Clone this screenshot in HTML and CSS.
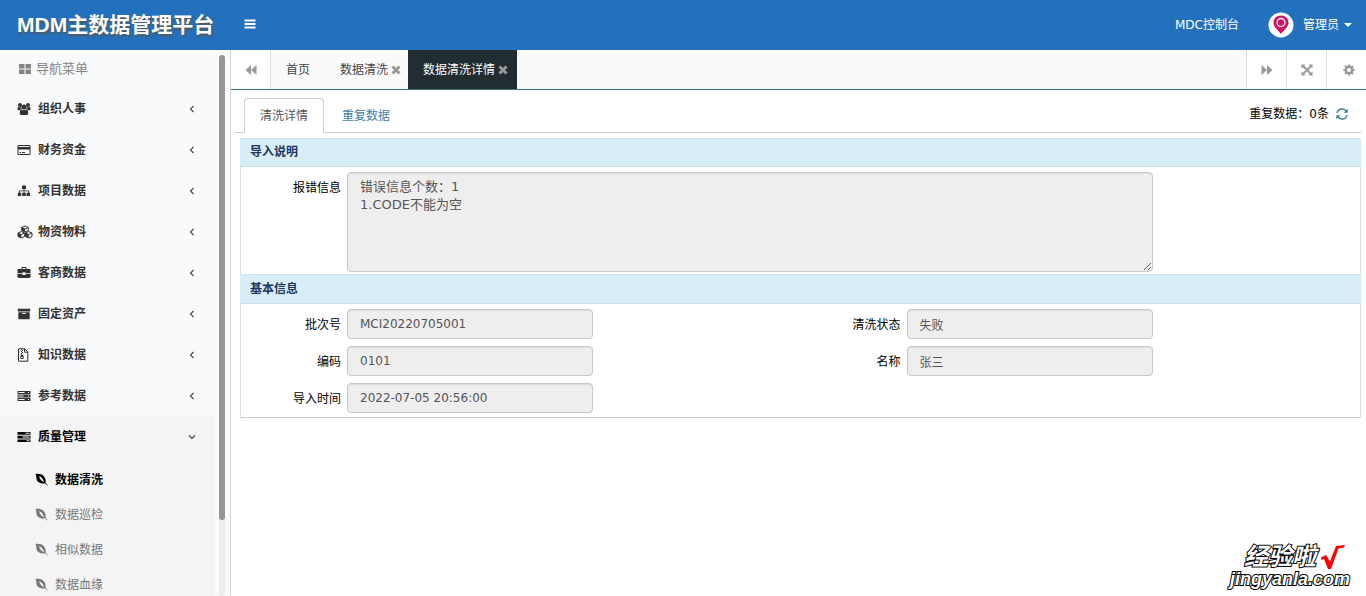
FILE: index.html
```html
<!DOCTYPE html>
<html lang="zh-CN">
<head>
<meta charset="utf-8">
<title>MDM主数据管理平台</title>
<link rel="stylesheet" href="styles.css">
</head>
<body>
<svg class="sprite" aria-hidden="true">
  <symbol id="chevron" viewBox="0 0 8 8"><path d="M5.500 1L2.500 4l3 3" fill="none" stroke="currentColor" stroke-width="1.100"/></symbol>
  <symbol id="leaf" viewBox="0 0 14 14"><path fill-rule="evenodd" d="M.5 1c3.500-.4 7 .2 9 2.400 1.700 1.900 2.300 4.400 1.800 6.900l2.400 2.900-.3.300-2.700-2.400C7.500 11.700 4 11 2.400 8.700 1 6.500 2 3 .5 1zM4.500 3.200c.1 2.600 2 5.400 5.200 6.800C9.300 7.500 7.500 4.500 4.500 3.200z"/></symbol>
  <symbol id="times" viewBox="0 0 10 10"><path d="M1.500 1.500l7 7m0-7l-7 7" fill="none" stroke="currentColor" stroke-width="3"/></symbol>
</svg>

<header class="topbar">
  <h1 class="brand">MDM主数据管理平台</h1>
  <button class="menu-toggle" aria-label="切换菜单"><svg class="icon-12" viewBox="0 0 12 12"><path d="M.5 1.500h11v2H.5zM.5 5h11v2H.5zM.5 8.500h11v2H.5z"/></svg></button>
  <a class="console" href="#">MDC控制台</a>
  <a class="user" href="#">
    <svg class="avatar" viewBox="0 0 26 26"><circle cx="13" cy="13" r="12.500" fill="#fff"/><path fill="#d0125f" d="M13 3.500c-4.300 0-7.500 3-7.500 7 0 4.500 4.500 7.500 7.500 11.500 3-4 7.500-7 7.500-11.500 0-4-3.200-7-7.500-7z"/><circle cx="13" cy="10.500" r="4" fill="none" stroke="#fff" stroke-width="1.300"/></svg>
    <span>管理员</span>
    <svg class="caret" viewBox="0 0 8 4"><path d="M0 0h8L4 4z"/></svg>
  </a>
</header>

<div class="shell">
  <aside class="sidebar">
    <nav class="nav">
      <div class="nav-title"><svg class="icon-14" viewBox="0 0 14 14"><path d="M1 2h5.500v4.500H1zM7.500 2H13v4.500H7.500zM1 7.500h5.500V12H1zM7.500 7.500H13V12H7.500z"/></svg>导航菜单</div>
      <a class="nav-item" href="#"><svg class="icon-14" viewBox="0 0 14 14"><circle cx="3" cy="3" r="2"/><circle cx="11" cy="3" r="2"/><path d="M.5 7.500C.3 5.500 1 4.700 2 4.900c1 .6 1.800.4 2.300.1 0 1 .1 1.500.6 2.200-1 0-1.800.3-2.200 1H1.500c-.6 0-1-.2-1-.7zM13.500 7.500c.2-2-.5-2.800-1.500-2.600-1 .6-1.800.4-2.300.1 0 1-.1 1.500-.6 2.200 1 0 1.800.3 2.200 1h1.200c.6 0 1-.2 1-.7z"/><circle cx="7" cy="5" r="2.500"/><path d="M4.800 7.400c1.400 1 3 1 4.400 0 1.500 0 2.100 1.700 2.100 3.700 0 1.200-.7 1.900-1.800 1.900h-5c-1.100 0-1.800-.7-1.800-1.900 0-2 .6-3.700 2.100-3.700z"/></svg>组织人事<svg class="arrow"><use href="#chevron"/></svg></a>
      <a class="nav-item" href="#"><svg class="icon-14" viewBox="0 0 14 14"><path fill-rule="evenodd" d="M1.500 2h11c.6 0 1 .4 1 1v8c0 .6-.4 1-1 1h-11c-.6 0-1-.4-1-1V3c0-.6.4-1 1-1zm0 1v1h11V3zm0 3.500V11h11V6.500zM2.500 9h1.500v1H2.500zM5 9h3v1H5z"/></svg>财务资金<svg class="arrow"><use href="#chevron"/></svg></a>
      <a class="nav-item" href="#"><svg class="icon-14" viewBox="0 0 14 14"><path d="M5 1.500h4V5H7.400v1.400h4.700v2.300H13V12H9.500V8.700h1.700V7.300H7.400v1.400h1.400V12H5.200V8.700h1.400V7.300H2.800v1.400h1.500V12H.8V8.700h1.100V6.400h4.700V5H5z"/></svg>项目数据<svg class="arrow"><use href="#chevron"/></svg></a>
      <a class="nav-item" href="#"><svg class="icon-cubes" viewBox="0 0 16 14"><g fill="none" stroke="currentColor" stroke-width="1"><path d="M8 1l3.300 1.500v3L8 7 4.700 5.500v-3zM4.700 2.500L8 4l3.300-1.500M4.300 6.500L7.700 8v3.500L4.300 13 1 11.500V8zM1 8l3.300 1.500L7.700 8M11.700 6.500L15 8v3.500L11.700 13l-3.400-1.500V8zM8.300 8l3.400 1.500L15 8"/></g><path d="M8 4L4.700 2.500v3L8 7zM1 8l3.300 1.500V13L1 11.500zM11.700 9.500L8.300 8v3.500l3.400 1.500z"/></svg>物资物料<svg class="arrow"><use href="#chevron"/></svg></a>
      <a class="nav-item" href="#"><svg class="icon-14" viewBox="0 0 14 14"><path fill-rule="evenodd" d="M4.500 3V1.800c0-.5.400-.8.800-.8h3.400c.4 0 .8.300.8.800V3h2.700c.8 0 1.300.5 1.300 1.200V7H8.500V6.300h-3V7H.5V4.200C.5 3.500 1 3 1.800 3zm1 0h3V2h-3zM.5 7.700h5v1.200h3V7.700h5v3.100c0 .7-.5 1.200-1.300 1.200H1.800c-.8 0-1.300-.5-1.300-1.200z"/></svg>客商数据<svg class="arrow"><use href="#chevron"/></svg></a>
      <a class="nav-item" href="#"><svg class="icon-14" viewBox="0 0 14 14"><path fill-rule="evenodd" d="M.8 1.800h12.400v2.700H.8zM1.300 5.200h11.400v7H1.300zM5.400 6v1.100h3.200V6z"/></svg>固定资产<svg class="arrow"><use href="#chevron"/></svg></a>
      <a class="nav-item" href="#"><svg class="icon-14" viewBox="0 0 14 14"><path d="M1.500.8h6.300l3 3v9.400H1.500zM7.500.8v3.400h3.300" fill="none" stroke="currentColor"/><path fill-rule="evenodd" d="M4 1h1v1H4zM5 2h1v1H5zM4 3h1v1H4zM5 4h1v1H5zM4 5h1v1H4zM4 6.500h2l.8 3c.1 1-.6 1.600-1.800 1.600s-1.900-.6-1.800-1.600zM4.200 9v1h1.600V9z"/></svg>知识数据<svg class="arrow"><use href="#chevron"/></svg></a>
      <a class="nav-item" href="#"><svg class="icon-14" viewBox="0 0 14 14"><path fill-rule="evenodd" d="M.5 2h13v3H.5zM1.500 3v1h6V3zm9.500 0v1h1V3zM.5 5.500h13v3H.5zM1.500 6.500v1h5v-1zm9.500 0v1h1v-1zM.5 9h13v3H.5zM1.500 10v1h6v-1zm9.500 0v1h1v-1z"/></svg>参考数据<svg class="arrow"><use href="#chevron"/></svg></a>
      <div class="nav-group">
        <a class="nav-item" href="#"><svg class="icon-14" viewBox="0 0 14 14"><path fill-rule="evenodd" d="M.5 2h13v2.700H.5zM8.500 2.800v1h4v-1zM.5 5.700h13v2.700H.5zM5.500 6.500v1h7v-1zM.5 9.400h13v2.700H.5zM9.500 10.200v1h3v-1z"/></svg>质量管理<svg class="arrow open"><use href="#chevron"/></svg></a>
        <a class="sub-item current" href="#"><svg class="icon-leaf"><use href="#leaf"/></svg>数据清洗</a>
        <a class="sub-item" href="#"><svg class="icon-leaf"><use href="#leaf"/></svg>数据巡检</a>
        <a class="sub-item" href="#"><svg class="icon-leaf"><use href="#leaf"/></svg>相似数据</a>
        <a class="sub-item" href="#"><svg class="icon-leaf"><use href="#leaf"/></svg>数据血缘</a>
      </div>
    </nav>
    <div class="scroll-track"><div class="scroll-thumb"></div></div>
  </aside>

  <main class="main">
    <div class="page-tabs">
      <button class="tool first" aria-label="向左"><svg class="icon-12" viewBox="0 0 12 12"><path d="M6 1v10L.5 6zM11.500 1v10L6 6z"/></svg></button>
      <a class="page-tab" href="#">首页</a>
      <a class="page-tab closable" href="#">数据清洗<svg class="times"><use href="#times"/></svg></a>
      <a class="page-tab closable active" href="#">数据清洗详情<svg class="times"><use href="#times"/></svg></a>
      <span class="spacer"></span>
      <button class="tool" aria-label="向右"><svg class="icon-12" viewBox="0 0 12 12"><path d="M.5 1v10L6 6zM6 1v10l5.500-5z"/></svg></button>
      <button class="tool" aria-label="全屏"><svg class="icon-12" viewBox="0 0 12 12"><path d="M.5.500h4L.5 4.500zM7.500.500h4v4zM.5 7.500v4h4zM11.500 7.500v4h-4z"/><path d="M2 2l8 8m0-8l-8 8" stroke="currentColor" stroke-width="1.800"/></svg></button>
      <button class="tool settings" aria-label="设置"><svg class="icon-12" viewBox="0 0 12 12"><circle cx="6" cy="6" r="3.200" fill="none" stroke="currentColor" stroke-width="2.400"/><path d="M6 .4v2m0 7.200v2M.4 6h2m7.200 0h2M2 2l1.500 1.500m5 5L10 10m0-8L8.500 3.500m-5 5L2 10" stroke="currentColor" stroke-width="2.200"/></svg></button>
    </div>

    <div class="content">
      <div class="detail-tabs">
        <a class="detail-tab active" href="#">清洗详情</a>
        <a class="detail-tab" href="#">重复数据</a>
        <div class="summary">重复数据：0条
          <button class="refresh" aria-label="刷新"><svg class="icon-12" viewBox="0 0 12 12"><path d="M1 5.200C1.500 2.700 3.600 1 6 1c1.500 0 2.900.6 3.900 1.700M11 6.800C10.500 9.300 8.400 11 6 11c-1.500 0-2.900-.6-3.900-1.700" fill="none" stroke="currentColor" stroke-width="1.400"/><path d="M11.700.8v4h-4zM.3 11.200v-4h4z"/></svg></button>
        </div>
      </div>

      <section class="panel">
        <h2 class="panel-head">导入说明</h2>
        <div class="panel-body">
          <div class="field top"><label for="errors">报错信息</label><textarea id="errors" readonly>错误信息个数：1
1.CODE不能为空</textarea></div>
        </div>
      </section>
      <section class="panel last">
        <h2 class="panel-head">基本信息</h2>
        <div class="panel-body grid">
          <div class="field"><label for="batch">批次号</label><input id="batch" value="MCI20220705001" readonly></div>
          <div class="field"><label for="status">清洗状态</label><input id="status" value="失败" readonly></div>
          <div class="field"><label for="code">编码</label><input id="code" value="0101" readonly></div>
          <div class="field"><label for="name">名称</label><input id="name" value="张三" readonly></div>
          <div class="field"><label for="time">导入时间</label><input id="time" value="2022-07-05 20:56:00" readonly></div>
        </div>
      </section>
    </div>
  </main>
</div>

<div class="watermark">
  <div class="mark-top">经验啦<svg class="check" viewBox="0 0 24 24"><path d="M0 12.500L5 10l4 6.500L15 1l9-1-1 2.500-5.500 1L10 24H7L3 14l-2.500 1z" fill="#f00"/></svg></div>
  <div class="mark-url">jingyanla.com</div>
</div>
</body>
</html>
```
FILE: styles.css
```css
* { box-sizing: border-box; }
body {
  margin: 0;
  height: 100vh;
  display: flex;
  flex-direction: column;
  overflow: hidden;
  background: #fff;
  color: #000;
  font: 12px/18px "DejaVu Sans", "Noto Sans CJK SC", sans-serif;
}
a { color: inherit; text-decoration: none; }
button { border: 0; padding: 0; background: none; color: inherit; display: flex; align-items: center; justify-content: center; }
svg { fill: currentColor; flex: none; }
.sprite { position: absolute; width: 0; height: 0; }
.icon-12 { width: 12px; height: 12px; }
.icon-14 { width: 14px; height: 14px; margin-right: 7px; }
.icon-cubes { width: 16px; height: 14px; margin-right: 5px; }

.topbar {
  flex: none;
  height: 50px;
  display: flex;
  align-items: center;
  padding: 0 14px 0 17px;
  background: #2371bd;
  color: #fff;
}
.brand {
  margin: 0;
  width: 227px;
  font: bold 21px/30px "Liberation Sans", "Noto Sans CJK SC", sans-serif;
  text-shadow: 1px 2px 2px #555;
  white-space: nowrap;
}
.menu-toggle { width: 12px; height: 48px; padding-bottom: 2px; }
.console { margin-left: auto; margin-right: 29px; }
.user { display: flex; align-items: center; }
.avatar { width: 26px; height: 26px; margin-right: 9px; }
.caret { width: 8px; height: 4px; margin-left: 5px; }

.shell { flex: 1; min-height: 0; display: flex; }
.sidebar {
  flex: none;
  width: 231px;
  display: flex;
  background: #f9fafc;
  border-right: 1px solid #d2d6de;
  overflow: hidden;
}
.nav { width: 214px; color: #333; }
.nav-title {
  display: flex;
  align-items: center;
  height: 38px;
  padding-left: 18px;
  color: #848484;
  font-size: 13px;
}
.nav-title .icon-14 { margin-right: 4px; }
.nav-item {
  display: flex;
  align-items: center;
  height: 41px;
  padding: 0 18px 0 17px;
  font-weight: bold;
}
.arrow { width: 8px; height: 8px; margin-left: auto; color: #444; }
.arrow.open { transform: rotate(-90deg); }
.nav-group { padding-bottom: 20px; background: #f4f4f5; }
.nav-group .nav-item { color: #000; margin-bottom: 5px; }
.sub-item {
  display: flex;
  align-items: center;
  height: 35px;
  padding-left: 35px;
  color: #777;
}
.sub-item.current { color: #000; font-weight: bold; }
.icon-leaf { width: 13px; height: 13px; margin-right: 7px; }
.scroll-track { width: 6px; margin: 5px 0 0 5px; border-radius: 3px; background: #ecedef; }
.scroll-thumb { height: 86%; border-radius: 3px; background: #969698; }

.main { flex: 1; min-width: 0; }
.page-tabs {
  display: flex;
  height: 40px;
  border-bottom: 1px solid #3c7277;
  background: #fafafa;
  color: #444;
}
.tool { width: 40px; background: #fff; color: #999; border-left: 1px solid #ddd; }
.tool.first { border-left: 0; border-right: 1px solid #ddd; }
.tool.settings { padding-left: 4px; }
.page-tab { display: flex; align-items: center; padding: 0 15px; }
.page-tab.closable { padding-right: 7px; }
.page-tab.active { background: #222d32; color: #fff; padding-right: 9px; }
.times { width: 10px; height: 10px; margin-left: 3px; color: #999; }
.spacer { flex: 1; }

.content { padding: 8px 5px 0 4px; }
.detail-tabs {
  display: flex;
  height: 35px;
  padding-left: 9px;
  border-bottom: 1px solid #ccc;
}
.detail-tab {
  height: 35px;
  padding: 8px 15px;
  border: 1px solid transparent;
  border-radius: 4px 4px 0 0;
  color: #457b9f;
}
.detail-tab.active {
  border-color: #ccc;
  border-bottom-color: #fff;
  background: #fff;
  color: #555;
  margin-right: 2px;
}
.summary { margin-left: auto; padding: 7px 13px 0 0; display: flex; gap: 7px; align-items: center; height: 25px; }
.refresh { color: #3c7f8f; }

.panel { margin-left: 5px; border: 1px solid #d5dfe2; border-top: 0; border-bottom: 0; }
.detail-tabs + .panel { margin-top: 5px; }
.panel.last { border-bottom: 1px solid #ccc; }
.panel-head {
  margin: 0 -1px;
  padding: 5px 10px;
  border-bottom: 1px solid #c4e2e8;
  border-top: 1px solid #d3e5ea;
  background: #d9edf6;
  color: #1b365d;
  font-size: 12px;
  line-height: 17px;
  font-weight: bold;
}
.panel.last .panel-head { line-height: 18px; }
.panel-body { padding: 5px 0 2px; }
.panel-body.grid {
  display: grid;
  grid-template-columns: 1fr 1fr;
  row-gap: 7px;
  padding-bottom: 4px;
}
.field { display: flex; align-items: center; }
.field label { width: 100px; margin-right: 6px; padding-top: 2px; text-align: right; }
.field.top { align-items: flex-start; }
.field.top label { padding-top: 7px; }
input, textarea {
  display: block;
  border: 1px solid #c8c8c8;
  border-radius: 4px;
  padding: 0 12px;
  background: #eee;
  color: #555;
  font: inherit;
  box-shadow: inset 0 1px 1px rgba(0, 0, 0, .08);
}
input { width: 44%; height: 30px; }
textarea { width: 72%; height: 100px; padding-top: 5px; font-size: 13px; line-height: 18px; resize: both; }

.watermark {
  position: absolute;
  right: 16px;
  bottom: 7px;
  color: #fff;
  font-family: "Liberation Sans", "Noto Sans CJK SC", sans-serif;
  font-weight: bold;
  -webkit-text-stroke: 2px #000;
  paint-order: stroke fill;
}
.mark-top {
  display: flex;
  align-items: center;
  justify-content: flex-end;
  gap: 5px;
  padding-right: 5px;
  font-size: 24px;
  line-height: 24px;
  font-style: italic;
}
.check { width: 24px; height: 24px; }
.mark-url { font-size: 18px; line-height: 20px; font-style: italic; }
```
